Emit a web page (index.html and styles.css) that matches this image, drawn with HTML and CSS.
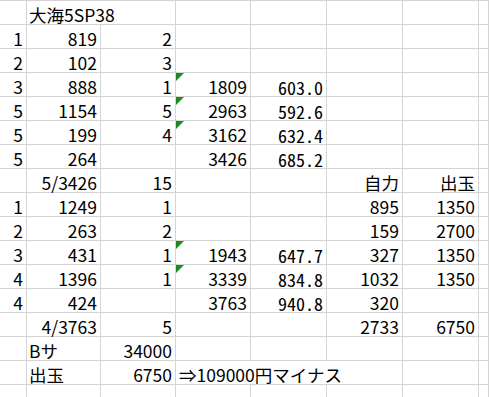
FILE: index.html
```html
<!DOCTYPE html>
<html lang="ja">
<head>
<meta charset="utf-8">
<link rel="stylesheet" href="styles.css">
</head>
<body>
<div class="sheet">
  <div class="c"></div><div class="c l s2">大海5SP38</div><div class="c"></div><div class="c"></div><div class="c"></div><div class="c"></div><div class="c"></div>

  <div class="c">1</div><div class="c">819</div><div class="c">2</div><div class="c"></div><div class="c"></div><div class="c"></div><div class="c"></div><div class="c"></div>
  <div class="c">2</div><div class="c">102</div><div class="c">3</div><div class="c"></div><div class="c"></div><div class="c"></div><div class="c"></div><div class="c"></div>
  <div class="c">3</div><div class="c">888</div><div class="c">1</div><div class="c tri">1809</div><div class="c m">603.0</div><div class="c"></div><div class="c"></div><div class="c"></div>
  <div class="c">5</div><div class="c">1154</div><div class="c">5</div><div class="c tri">2963</div><div class="c m">592.6</div><div class="c"></div><div class="c"></div><div class="c"></div>
  <div class="c">5</div><div class="c">199</div><div class="c">4</div><div class="c tri">3162</div><div class="c m">632.4</div><div class="c"></div><div class="c"></div><div class="c"></div>
  <div class="c">5</div><div class="c">264</div><div class="c"></div><div class="c">3426</div><div class="c m">685.2</div><div class="c"></div><div class="c"></div><div class="c"></div>
  <div class="c"></div><div class="c">5/3426</div><div class="c">15</div><div class="c"></div><div class="c"></div><div class="c">自力</div><div class="c">出玉</div><div class="c"></div>
  <div class="c">1</div><div class="c">1249</div><div class="c">1</div><div class="c"></div><div class="c"></div><div class="c">895</div><div class="c">1350</div><div class="c"></div>
  <div class="c">2</div><div class="c">263</div><div class="c">2</div><div class="c"></div><div class="c"></div><div class="c">159</div><div class="c">2700</div><div class="c"></div>
  <div class="c">3</div><div class="c">431</div><div class="c">1</div><div class="c tri">1943</div><div class="c m">647.7</div><div class="c">327</div><div class="c">1350</div><div class="c"></div>
  <div class="c">4</div><div class="c">1396</div><div class="c">1</div><div class="c tri">3339</div><div class="c m">834.8</div><div class="c">1032</div><div class="c">1350</div><div class="c"></div>
  <div class="c">4</div><div class="c">424</div><div class="c"></div><div class="c">3763</div><div class="c m">940.8</div><div class="c">320</div><div class="c"></div><div class="c"></div>
  <div class="c"></div><div class="c">4/3763</div><div class="c">5</div><div class="c"></div><div class="c"></div><div class="c">2733</div><div class="c">6750</div><div class="c"></div>
  <div class="c"></div><div class="c l">Bサ</div><div class="c">34000</div><div class="c"></div><div class="c"></div><div class="c"></div><div class="c"></div><div class="c"></div>
  <div class="c"></div><div class="c l">出玉</div><div class="c">6750</div><div class="c l s3 arrow">⇒109000円マイナス</div><div class="c"></div><div class="c"></div>
  <div class="c"></div><div class="c"></div><div class="c"></div><div class="c"></div><div class="c"></div><div class="c"></div><div class="c"></div><div class="c"></div>
</div>
</body>
</html>
```

FILE: styles.css
```css
html, body {
  margin: 0;
  padding: 0;
  background: #ffffff;
  overflow: hidden;
}

.sheet {
  display: grid;
  grid-template-columns: 27px 74px 75px 75px 76px 76px 76px 1fr;
  grid-auto-rows: 24px;
  border-top: 1px solid #d4d4d4;
  font-family: "Noto Sans CJK JP", sans-serif;
  font-size: 17.5px;
  color: #000000;
}

.c {
  box-sizing: border-box;
  border-right: 1px solid #d4d4d4;
  border-bottom: 1px solid #d4d4d4;
  display: flex;
  align-items: flex-end;
  justify-content: flex-end;
  line-height: 18px;
  padding: 0 3px 0 2px;
  white-space: nowrap;
  position: relative;
}

.l {
  justify-content: flex-start;
}

.arrow {
  padding-left: 3px;
}

.s2 {
  grid-column: span 2;
}

.s3 {
  grid-column: span 3;
}

.m {
  font-feature-settings: "hwid";
  font-size: 18px;
}

.tri::before {
  content: "";
  position: absolute;
  left: 0;
  top: 0;
  width: 0;
  height: 0;
  border-top: 8px solid #1d8a1d;
  border-right: 8px solid transparent;
}
```
